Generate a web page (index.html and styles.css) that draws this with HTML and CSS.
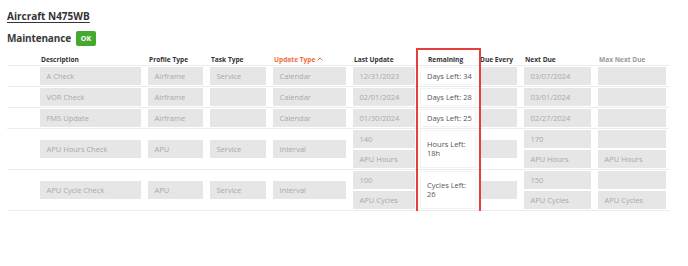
FILE: index.html
```html
<!DOCTYPE html>
<html lang="en">
<head>
<meta charset="utf-8">
<title>Aircraft N475WB</title>
<link rel="stylesheet" href="styles.css">
</head>
<body>
<div class="page">
  <h1 class="title">Aircraft N475WB</h1>
  <div class="section-head">
    <h2 class="section-title">Maintenance</h2>
    <span class="badge">OK</span>
  </div>
  <div class="table">
    <div class="row head">
      <div></div>
      <div class="th">Description</div>
      <div class="th">Profile Type</div>
      <div class="th">Task Type</div>
      <div class="th sorted">Update Type <svg class="chev" width="6" height="4" viewBox="0 0 6 4"><path d="M0.6 3.4 L3 1 L5.4 3.4" fill="none" stroke="#f26b3a" stroke-width="1"/></svg></div>
      <div class="th">Last Update</div>
      <div class="th rem">Remaining</div>
      <div class="th due">Due Every</div>
      <div class="th">Next Due</div>
      <div class="th muted">Max Next Due</div>
    </div>

    <div class="row">
      <div></div>
      <div class="box">A Check</div>
      <div class="box">Airframe</div>
      <div class="box">Service</div>
      <div class="box">Calendar</div>
      <div class="box">12/31/2023</div>
      <div class="remain">Days Left: 34</div>
      <div class="box"></div>
      <div class="box">03/07/2024</div>
      <div class="box"></div>
    </div>

    <div class="row">
      <div></div>
      <div class="box">VOR Check</div>
      <div class="box">Airframe</div>
      <div class="box"></div>
      <div class="box">Calendar</div>
      <div class="box">02/01/2024</div>
      <div class="remain">Days Left: 28</div>
      <div class="box"></div>
      <div class="box">03/01/2024</div>
      <div class="box"></div>
    </div>

    <div class="row">
      <div></div>
      <div class="box">FMS Update</div>
      <div class="box">Airframe</div>
      <div class="box"></div>
      <div class="box">Calendar</div>
      <div class="box">01/30/2024</div>
      <div class="remain">Days Left: 25</div>
      <div class="box"></div>
      <div class="box">02/27/2024</div>
      <div class="box"></div>
    </div>

    <div class="row">
      <div></div>
      <div class="box">APU Hours Check</div>
      <div class="box">APU</div>
      <div class="box">Service</div>
      <div class="box">Interval</div>
      <div class="stack"><div class="box">140</div><div class="box">APU Hours</div></div>
      <div class="remain">Hours Left:<br>18h</div>
      <div class="box"></div>
      <div class="stack"><div class="box">170</div><div class="box">APU Hours</div></div>
      <div class="stack"><div class="box"></div><div class="box">APU Hours</div></div>
    </div>

    <div class="row last">
      <div></div>
      <div class="box">APU Cycle Check</div>
      <div class="box">APU</div>
      <div class="box">Service</div>
      <div class="box">Interval</div>
      <div class="stack"><div class="box">100</div><div class="box">APU Cycles</div></div>
      <div class="remain">Cycles Left:<br>26</div>
      <div class="box"></div>
      <div class="stack"><div class="box">150</div><div class="box">APU Cycles</div></div>
      <div class="stack"><div class="box"></div><div class="box">APU Cycles</div></div>
    </div>

    <div class="highlight"></div>
  </div>
</div>
</body>
</html>
```
FILE: styles.css
```css
* { box-sizing: border-box; }

html, body {
  margin: 0;
  padding: 0;
  background: #ffffff;
}

body {
  font-family: "Open Sans", "Liberation Sans", sans-serif;
  color: #333333;
}

.page {
  padding: 9px 0 0 7px;
}

.title {
  margin: 0;
  font-size: 10px;
  line-height: 14px;
  font-weight: 700;
  color: #333333;
  text-decoration: underline;
  text-underline-offset: 1.5px;
}

.section-head {
  margin-top: 7px;
  display: flex;
  align-items: center;
  gap: 5px;
  height: 16px;
}

.section-title {
  margin: 0;
  font-size: 10px;
  letter-spacing: -0.15px;
  line-height: 16px;
  font-weight: 700;
  color: #3a3a3a;
}

.badge {
  display: inline-flex;
  align-items: center;
  justify-content: center;
  width: 20px;
  height: 15px;
  border-radius: 2px;
  background: #45a92f;
  color: #ffffff;
  font-size: 7px;
  font-weight: 700;
}

.table {
  position: relative;
  width: 662px;
}

.row {
  display: grid;
  grid-template-columns: 26px 101px 55px 56px 73px 62px 52px 36px 67px 68px;
  column-gap: 7px;
  align-items: center;
  padding: 1px 3px 1px 0;
  border-top: 1px solid #ececec;
}

.row.last {
  border-bottom: 1px solid #ececec;
}

.row.head {
  border-top: none;
  height: 19px;
  align-items: end;
  padding: 0 0 1.5px 0;
}

.th {
  font-size: 6.6px;
  line-height: 9px;
  font-weight: 700;
  color: #333333;
  padding-left: 1px;
  white-space: nowrap;
}

.th.sorted {
  color: #f26b3a;
  display: flex;
  align-items: center;
  gap: 2px;
}

.th.muted { color: #9a9a9a; }

.th.rem { padding-left: 6px; }

.th.due { margin-left: -2px; }

.chev { display: block; margin-top: -1px; }

.box {
  height: 18px;
  background: #e6e6e6;
  display: flex;
  align-items: center;
  padding-left: 6.5px;
  font-size: 7.5px;
  color: #a9a9a9;
  white-space: nowrap;
  overflow: hidden;
}

.stack {
  display: flex;
  flex-direction: column;
  gap: 2px;
}

.remain {
  align-self: stretch;
  display: flex;
  align-items: center;
  min-height: 18px;
  margin: 0 -2px;
  padding: 0 0 0 6px;
  background: #ffffff;
  border: 1px solid #f3f3f3;
  font-size: 7.5px;
  line-height: 9px;
  color: #555555;
  white-space: nowrap;
}

.highlight {
  position: absolute;
  left: 409px;
  top: 1.5px;
  width: 65px;
  height: 171px;
  border: 2px solid #e5413b;
  pointer-events: none;
}
```
